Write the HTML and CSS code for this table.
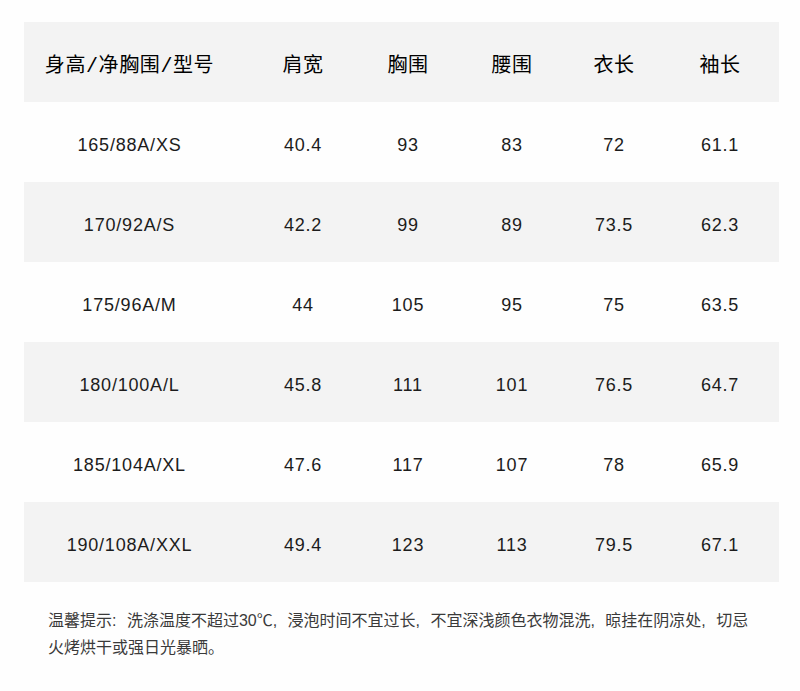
FILE: index.html
```html
<!DOCTYPE html>
<html lang="zh-CN">
<head>
<meta charset="utf-8">
<title>尺码表</title>
<link rel="stylesheet" href="styles.css">
</head>
<body>
<div class="page">
  <div class="size-table">
    <div class="row head">
      <div class="cell first">身高/净胸围/型号</div>
      <div class="cell">肩宽</div>
      <div class="cell">胸围</div>
      <div class="cell">腰围</div>
      <div class="cell">衣长</div>
      <div class="cell">袖长</div>
    </div>
    <div class="row">
      <div class="cell first">165/88A/XS</div>
      <div class="cell">40.4</div>
      <div class="cell">93</div>
      <div class="cell">83</div>
      <div class="cell">72</div>
      <div class="cell">61.1</div>
    </div>
    <div class="row alt">
      <div class="cell first">170/92A/S</div>
      <div class="cell">42.2</div>
      <div class="cell">99</div>
      <div class="cell">89</div>
      <div class="cell">73.5</div>
      <div class="cell">62.3</div>
    </div>
    <div class="row">
      <div class="cell first">175/96A/M</div>
      <div class="cell">44</div>
      <div class="cell">105</div>
      <div class="cell">95</div>
      <div class="cell">75</div>
      <div class="cell">63.5</div>
    </div>
    <div class="row alt">
      <div class="cell first">180/100A/L</div>
      <div class="cell">45.8</div>
      <div class="cell">111</div>
      <div class="cell">101</div>
      <div class="cell">76.5</div>
      <div class="cell">64.7</div>
    </div>
    <div class="row">
      <div class="cell first">185/104A/XL</div>
      <div class="cell">47.6</div>
      <div class="cell">117</div>
      <div class="cell">107</div>
      <div class="cell">78</div>
      <div class="cell">65.9</div>
    </div>
    <div class="row alt">
      <div class="cell first">190/108A/XXL</div>
      <div class="cell">49.4</div>
      <div class="cell">123</div>
      <div class="cell">113</div>
      <div class="cell">79.5</div>
      <div class="cell">67.1</div>
    </div>
  </div>
  <p class="note">温馨提示: 洗涤温度不超过30℃, 浸泡时间不宜过长, 不宜深浅颜色衣物混洗, 晾挂在阴凉处, 切忌火烤烘干或强日光暴晒。</p>
</div>
</body>
</html>
```
FILE: styles.css
```css
html, body {
  margin: 0;
  padding: 0;
  background: #fefefe;
}

.page {
  padding: 22px 21px 0 24px;
}

.size-table {
  display: flex;
  flex-direction: column;
  width: 755px;
}

.row {
  display: grid;
  grid-template-columns: 223px 112px 98px 110px 94px 118px;
  height: 80px;
  align-items: center;
  padding-top: 6px;
  box-sizing: border-box;
  font-family: "Liberation Sans", Arial, "Noto Sans CJK SC", sans-serif;
  font-size: 18px;
  letter-spacing: 0.8px;
  color: #1c1c1c;
}

.row.alt {
  background: #f3f3f3;
}

.row.head {
  background: #f3f3f3;
  padding-top: 2px;
  font-family: "Liberation Mono", "Noto Sans CJK SC", sans-serif;
  font-size: 20px;
  font-weight: 400;
  letter-spacing: 0.6px;
  color: #000;
}

.cell {
  text-align: center;
  white-space: nowrap;
}

.cell.first {
  padding-right: 12px;
}

.note {
  margin: 25px 0 0 24px;
  width: 706px;
  font-family: "Liberation Sans", "Noto Sans CJK SC", sans-serif;
  font-size: 16px;
  line-height: 27px;
  word-spacing: 6px;
  color: #3a3a3a;
}
```
